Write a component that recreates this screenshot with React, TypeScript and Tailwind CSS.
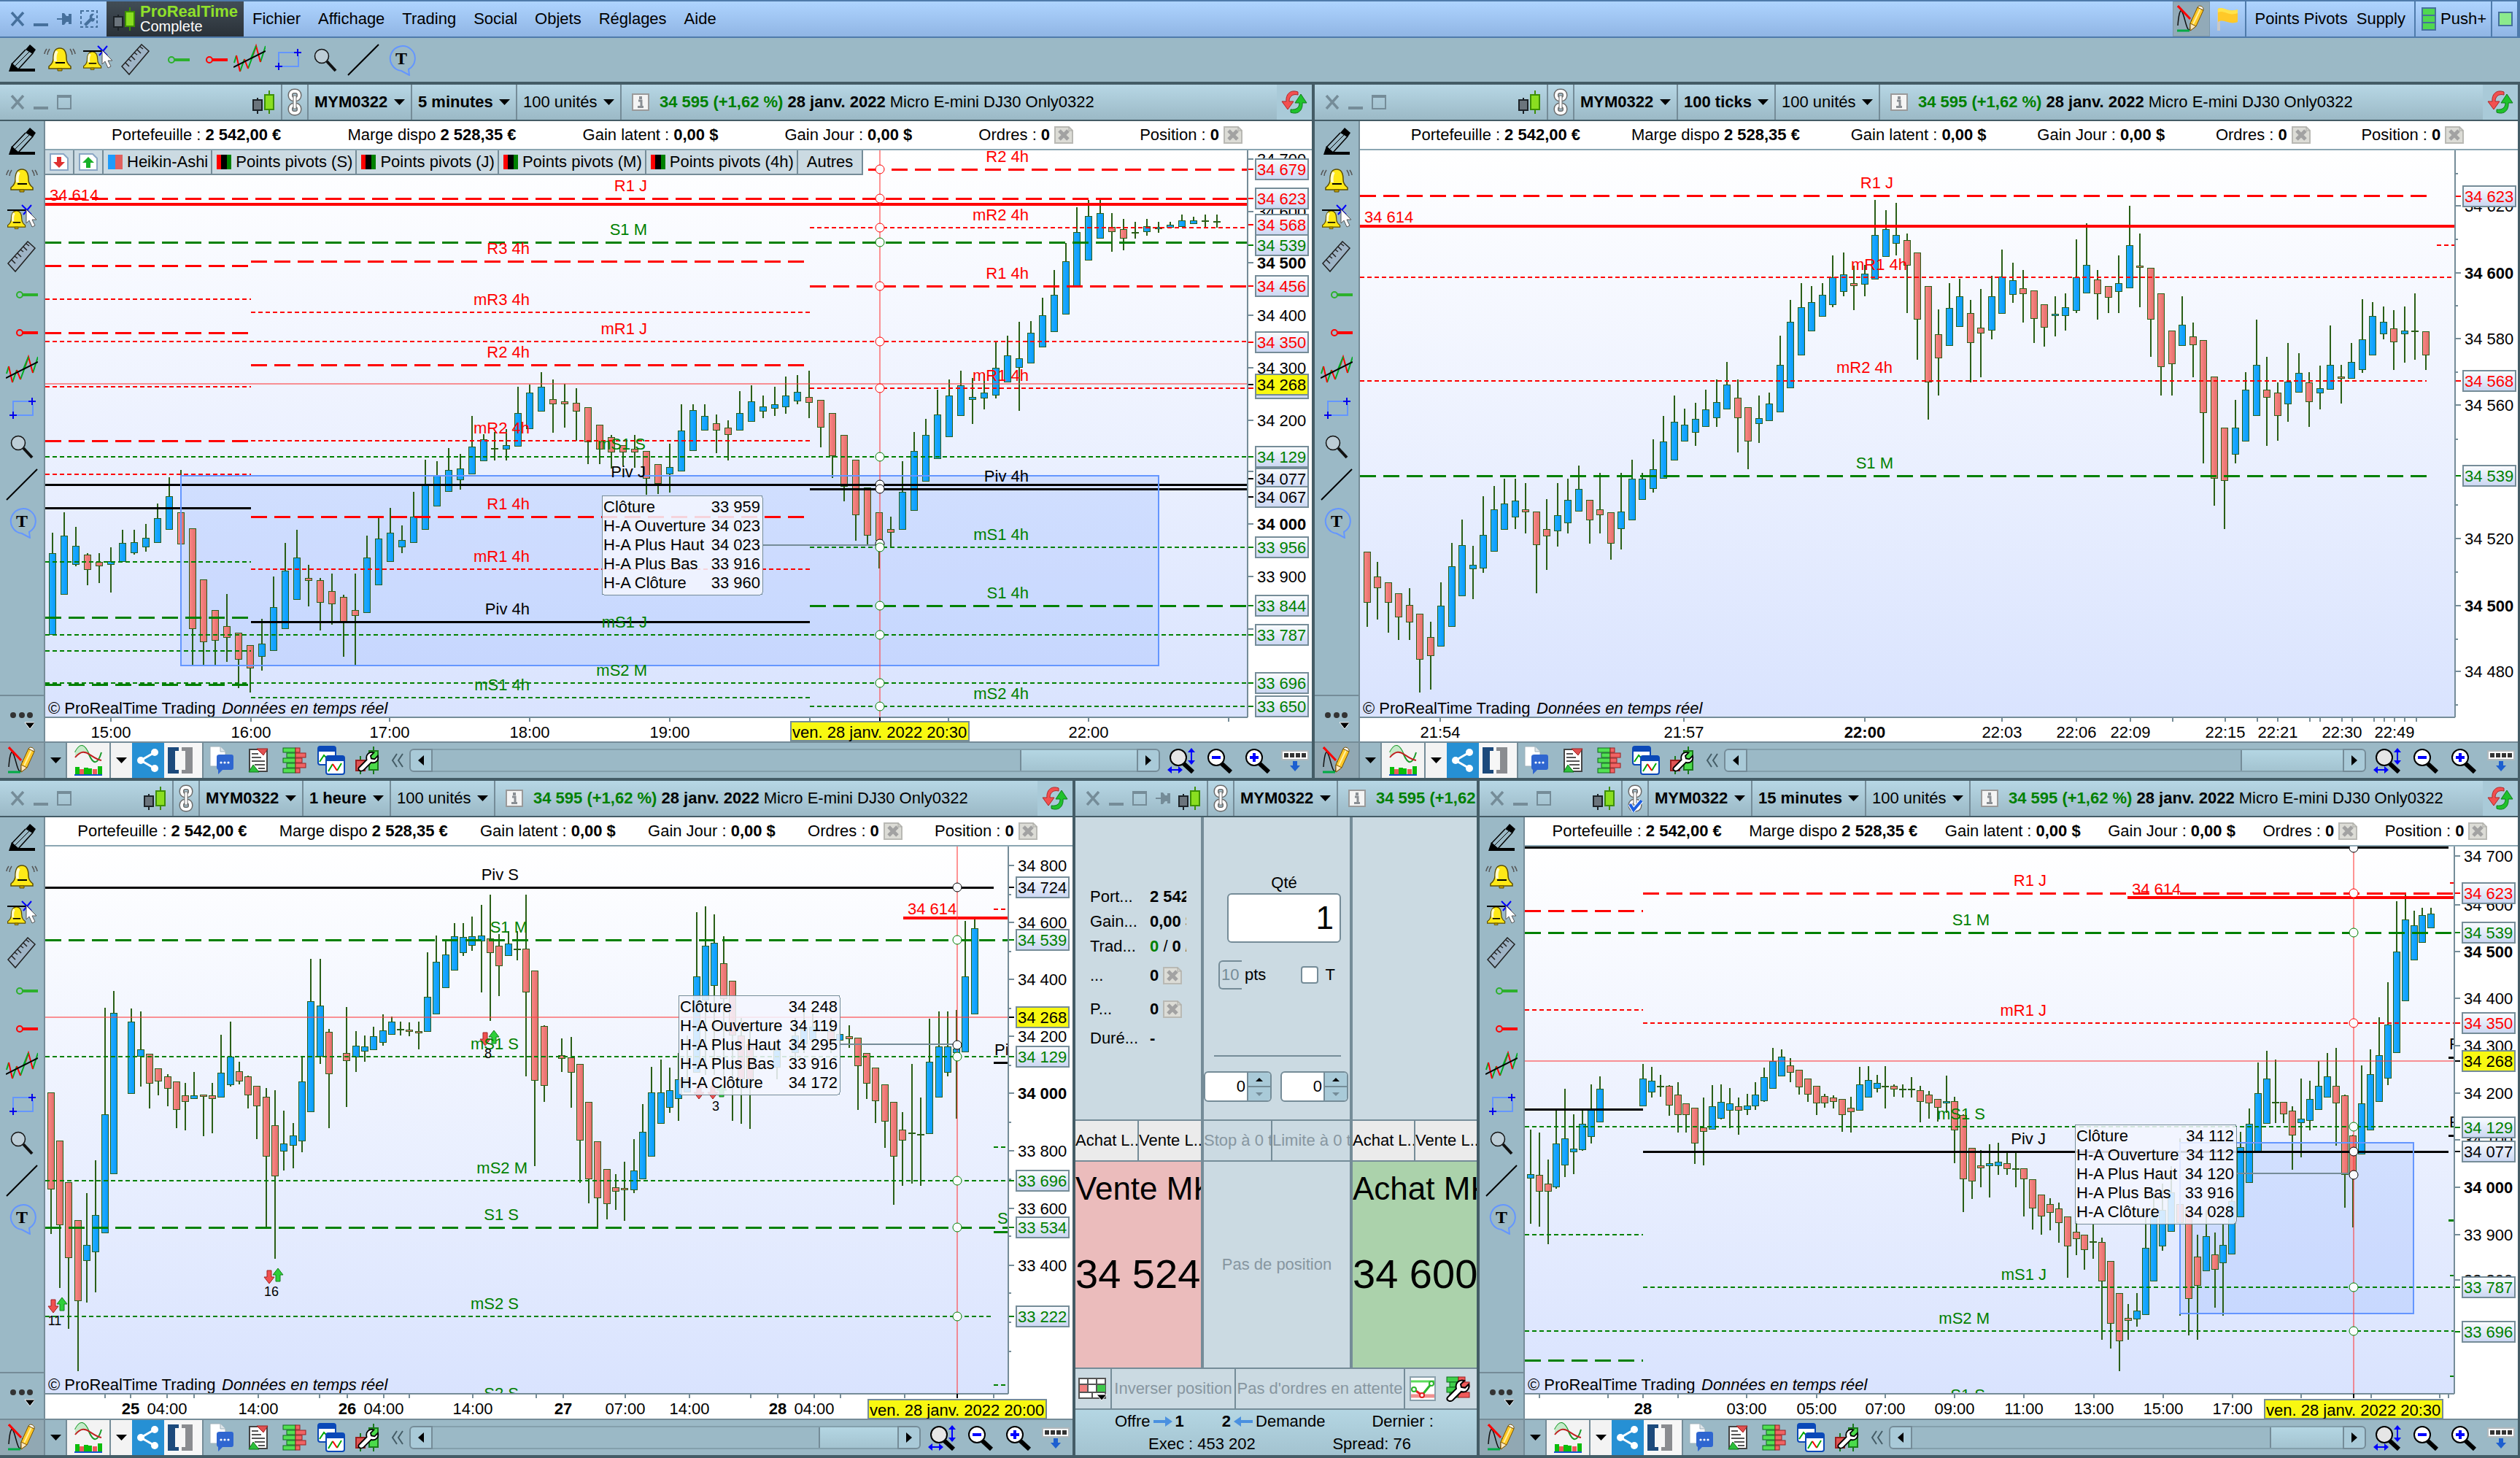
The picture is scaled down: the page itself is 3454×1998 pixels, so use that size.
import { FC, ReactNode } from "react";

type Bar = [number, number, number, number, 0 | 1] | null;

interface Series {
  x0: number;
  step: number;
  segments: { y0: number; k: number; bars: Bar[] }[];
}

interface ChartData {
  id: string;
  x: number;
  y: number;
  w: number;
  h: number;
  right: number;
  bottom: number;
  zone?: [number, number, number, number];
  // y, x1, x2, colour, style
  lines: [number, number, number, string, "dash" | "dot" | "solid" | "thick"][];
  // text, x, baseline, colour, starts at x instead of ending there
  labels: [string, number, number, string, boolean?][];
  // y, text, kind
  axis: [number, string, string?][];
  ticks?: number[];
  // x, text, bold
  times: [number, string, boolean?][];
  timeTicks: number[];
  series: Series;
  cross?: { x: number; y: number; dots: [number, string][]; date: [number, number, string] };
  tip?: { x: number; y: number; w: number; toX: number; lineY: number; values: string[] };
  trades?: { red: [number, number][]; green: [number, number][]; text: [number, number, string][] };
}

const R = "#ff0000";
const G = "#008000";
const K = "#000000";

const fiveMinutes: Series = {
  x0: 72,
  step: 15.96,
  segments: [
    {
      y0: 400,
      k: 2.306,
      bars: [
        [761, 826, 1083, 1083, 1], [696, 770, 956, 956, 1], [742, 803, 863, 868, 1], [826, 830, 878, 928, 0],
        [826, 854, 867, 920, 0], [807, 850, 863, 951, 1], [752, 794, 853, 853, 1], [752, 790, 826, 830, 1],
        [733, 776, 807, 822, 1], [669, 715, 794, 794, 1], [585, 646, 752, 752, 1], [563, 697, 798, 798, 0],
        [748, 748, 1066, 1180, 0], [909, 909, 1107, 1180, 0], [1006, 1006, 1103, 1180, 0], [955, 1057, 1093, 1168, 0],
        [1076, 1076, 1162, 1252, 0], [1117, 1117, 1190, 1265, 0], [1034, 1112, 1153, 1197, 1], [899, 997, 1135, 1135, 1],
        [793, 882, 1066, 1066, 1], [752, 840, 973, 973, 1], [862, 905, 913, 993, 0], [905, 910, 983, 1070, 0],
        [890, 946, 987, 1052, 0], [956, 965, 1048, 1153, 0], [890, 1006, 1024, 1180, 0], [770, 840, 1015, 1015, 1],
        [711, 780, 928, 928, 1], [683, 762, 853, 853, 1], [739, 785, 807, 826, 1], [632, 711, 794, 794, 1],
        [531, 609, 752, 752, 1], [535, 581, 678, 678, 1], [493, 563, 632, 632, 1], [513, 558, 596, 625, 1],
        [392, 489, 577, 577, 1], [449, 466, 535, 535, 1], [443, 494, 499, 532, 1], [433, 485, 499, 532, 1],
        [299, 383, 489, 489, 1], [294, 319, 433, 433, 1], [254, 300, 378, 378, 1], [277, 338, 355, 445, 0],
        [290, 347, 355, 430, 0], [304, 351, 378, 471, 0], [365, 365, 475, 545, 0], [420, 420, 498, 545, 0],
        [452, 458, 508, 558, 0], [485, 485, 508, 549, 0], [452, 495, 508, 555, 0], [503, 503, 591, 642, 0],
        [545, 545, 607, 638, 0], [480, 554, 577, 633, 1], [355, 438, 568, 568, 1], [355, 374, 503, 503, 1],
        [355, 392, 438, 438, 1], [388, 416, 438, 510, 0], [406, 430, 452, 532, 0], [314, 383, 438, 438, 1],
        [295, 346, 410, 410, 1], [327, 361, 378, 398, 1], [300, 356, 370, 393, 1], [267, 328, 365, 384, 1],
        [263, 315, 346, 355, 1], [249, 333, 351, 398, 0], [342, 342, 430, 491, 0], [383, 383, 518, 588, 0],
      ],
    },
    {
      y0: 400,
      k: 2.24,
      bars: [
        [439, 439, 597, 642, 0], [516, 516, 686, 764, 0], [601, 601, 748, 777, 0], [677, 677, 764, 848, 0],
        [690, 727, 740, 782, 0], [520, 614, 731, 731, 1], [430, 489, 672, 672, 1], [390, 440, 583, 583, 1],
        [300, 377, 512, 512, 1], [268, 318, 445, 445, 1], [242, 287, 381, 381, 1], [264, 323, 332, 405, 1],
        [251, 309, 328, 360, 1], [153, 234, 319, 328, 1], [135, 194, 278, 278, 1], [91, 203, 234, 364, 1],
        [90, 126, 220, 220, 1], [18, 72, 171, 171, 1],
      ],
    },
    {
      y0: 0,
      k: 3,
      bars: [
        [1110, 1213, 1366, 1366, 1], [1000, 1075, 1292, 1292, 1], [852, 955, 1175, 1175, 1], [822, 888, 1070, 1070, 1],
        [820, 877, 980, 980, 1], [877, 932, 955, 1035, 0], [900, 942, 980, 1028, 0], [912, 955, 961, 980, 1],
        [900, 931, 955, 968, 1], [912, 932, 943, 956, 1], [912, 925, 937, 937, 1], [882, 907, 932, 932, 1],
        [890, 907, 920, 920, 1], [882, 906, 912, 935, 1], [882, 908, 910, 935, 0],
      ],
    },
  ],
};

const hundredTicks: Series = {
  x0: 1873.8,
  step: 14.51,
  segments: [
    {
      y0: 180,
      k: 1.742,
      bars: [
        [1004, 1004, 1126, 1183, 0], [1028, 1063, 1091, 1166, 0], [1077, 1077, 1126, 1196, 0], [1102, 1102, 1160, 1214, 0],
        [1090, 1130, 1172, 1214, 0], [1151, 1151, 1262, 1340, 0], [1171, 1207, 1252, 1333, 0], [1077, 1133, 1230, 1230, 1],
        [983, 1039, 1182, 1182, 1], [926, 987, 1109, 1109, 1], [990, 1035, 1046, 1117, 1], [871, 963, 1043, 1054, 1],
        [846, 903, 1004, 1004, 1], [829, 889, 952, 952, 1], [829, 882, 921, 950, 1], [840, 903, 910, 960, 0],
        [907, 907, 987, 1103, 0], [878, 949, 966, 1047, 0], [840, 917, 955, 991, 1], [829, 879, 935, 960, 1],
        [798, 854, 907, 907, 1], [879, 879, 928, 984, 0], [815, 903, 917, 960, 0], [910, 910, 984, 1023, 0],
        [815, 907, 949, 998, 1], [784, 830, 928, 928, 1], [815, 830, 879, 879, 1], [735, 806, 854, 862, 1],
        [679, 740, 830, 830, 1], [631, 694, 785, 785, 1], [662, 701, 740, 740, 1], [648, 687, 719, 750, 1],
        [617, 663, 705, 705, 1], [592, 646, 684, 706, 1], [551, 604, 663, 663, 1], [592, 635, 684, 767, 0],
        [659, 659, 740, 806, 0], [630, 684, 698, 743, 1], [624, 649, 691, 691, 1], [488, 558, 670, 670, 1],
        [402, 454, 614, 614, 1], [362, 419, 534, 534, 1], [369, 408, 478, 478, 1], [362, 391, 443, 443, 1],
        [296, 349, 415, 419, 1], [289, 342, 384, 394, 1], [320, 363, 370, 426, 0], [318, 339, 366, 394, 1],
        [164, 248, 353, 353, 1], [189, 234, 300, 300, 1], [171, 248, 269, 297, 1], [244, 259, 321, 433, 0],
        [290, 290, 450, 545, 0], [370, 370, 600, 688, 0], [425, 485, 541, 631, 0], [362, 422, 513, 513, 1],
        [352, 394, 467, 467, 1], [402, 433, 506, 600, 0], [376, 468, 482, 587, 0], [345, 394, 475, 497, 1],
        [282, 346, 436, 436, 1], [313, 356, 391, 409, 1], [331, 374, 388, 457, 0], [380, 380, 447, 506, 0],
        [412, 412, 468, 514, 0], [394, 436, 440, 489, 1], [387, 419, 440, 476, 1], [258, 348, 429, 433, 1],
        [220, 318, 387, 387, 1], [331, 353, 388, 450, 0], [370, 370, 398, 433, 0], [296, 363, 384, 433, 1],
        [178, 272, 374, 374, 1], [244, 321, 325, 420, 0], [325, 325, 450, 538, 0], [387, 387, 562, 631, 0],
        [475, 475, 555, 631, 0], [394, 461, 513, 513, 1], [457, 489, 510, 587, 0], [499, 499, 673, 793, 0],
        [586, 586, 830, 894, 0], [708, 708, 834, 950, 0], [641, 708, 771, 793, 1], [575, 617, 740, 740, 1],
        [449, 558, 680, 680, 1], [538, 617, 635, 750, 0], [600, 624, 680, 738, 0], [505, 597, 652, 694, 1],
        [530, 576, 624, 624, 1], [575, 600, 646, 706, 0], [560, 614, 625, 663, 1], [463, 558, 617, 617, 1],
        [558, 586, 590, 649, 0], [505, 551, 590, 590, 1], [401, 496, 569, 576, 1], [408, 440, 534, 534, 1],
        [418, 454, 485, 496, 1], [426, 471, 503, 569, 0], [418, 475, 485, 552, 1], [387, 475, 478, 545, 1],
        [478, 478, 534, 569, 0],
      ],
    },
  ],
};

const oneHour: Series = {
  x0: 69.8,
  step: 12.29,
  segments: [
    {
      y0: 1060,
      k: 1.6716,
      bars: [
        [730, 730, 953, 1055, 0], [840, 840, 1034, 1178, 0], [936, 936, 1110, 1272, 0], [1023, 1023, 1208, 1369, 0],
        [961, 1080, 1117, 1212, 1], [886, 1011, 1097, 1189, 1], [536, 780, 1053, 1053, 1], [498, 549, 917, 917, 1],
        null, [538, 569, 733, 733, 1], [545, 632, 648, 717, 1], [642, 642, 710, 768, 0],
        [676, 676, 705, 738, 0], [688, 694, 722, 763, 0], [705, 705, 770, 812, 0], [709, 737, 753, 817, 0],
        [684, 738, 745, 745, 1], [736, 736, 740, 830, 0], [709, 737, 746, 824, 0], [598, 686, 742, 742, 1],
        [569, 649, 713, 717, 1], [660, 682, 706, 712, 0], [692, 694, 737, 768, 0], [715, 715, 763, 838, 0],
        [720, 740, 877, 1040, 0], [725, 806, 923, 1112, 0], [773, 847, 866, 910, 1], [800, 829, 853, 904, 1],
        [647, 706, 843, 868, 1], [425, 522, 776, 776, 1], [425, 532, 649, 666, 1], [585, 592, 689, 812, 0],
        null, [535, 640, 659, 764, 0], [590, 623, 650, 683, 1], [600, 626, 637, 660, 1],
        [580, 602, 633, 633, 1], [552, 588, 616, 623, 1], [556, 569, 598, 598, 1], [568, 585, 587, 600, 0],
        [570, 586, 591, 602, 0], [569, 590, 595, 632, 0], [410, 512, 592, 592, 1], [371, 432, 552, 552, 1],
        [385, 415, 491, 491, 1], [342, 372, 452, 452, 1], [342, 374, 411, 418, 1], [328, 373, 395, 406, 1],
        [301, 371, 384, 502, 1], [277, 378, 411, 566, 0], [367, 395, 441, 510, 0], [361, 389, 418, 418, 1],
        [361, 402, 405, 428, 0], [277, 402, 501, 694, 0], [451, 451, 703, 900, 0], [577, 579, 715, 753, 0],
        null, [607, 646, 653, 683, 0], [604, 650, 685, 765, 0], [665, 665, 840, 938, 0],
        [753, 753, 930, 985, 0], [843, 843, 973, 1040, 0], [906, 906, 987, 1021, 0], [918, 948, 957, 1000, 0],
        [890, 949, 954, 1025, 0], [838, 910, 954, 961, 1], [758, 820, 930, 930, 1], [672, 730, 877, 877, 1],
        [656, 730, 803, 803, 1], [673, 725, 766, 777, 1], [640, 700, 746, 795, 1], [600, 700, 730, 730, 1],
        [318, 465, 686, 686, 1], [304, 395, 520, 690, 1], [322, 388, 486, 690, 1], [372, 435, 516, 700, 0],
        [475, 475, 600, 795, 0], [560, 600, 700, 802, 0], [580, 620, 700, 814, 0], null,
        null, [610, 634, 673, 700, 1], null, [560, 600, 640, 660, 1],
        [545, 585, 620, 640, 1], [550, 580, 610, 630, 1], null, [560, 590, 610, 640, 0],
        [565, 596, 612, 625, 1], [577, 602, 609, 628, 0], [605, 605, 670, 771, 0], [640, 640, 710, 745, 0],
        [673, 673, 750, 801, 0], [712, 712, 797, 858, 0], [753, 753, 877, 988, 0], [775, 816, 840, 944, 0],
        [665, 823, 826, 940, 1], [743, 826, 829, 944, 0], [562, 660, 826, 826, 1], [545, 626, 743, 743, 1],
        [545, 626, 686, 693, 1], [542, 630, 640, 790, 1], [338, 465, 639, 639, 1], [333, 355, 552, 552, 1],
      ],
    },
  ],
};

const quarterHour: Series = {
  x0: 2097.8,
  step: 11.87,
  segments: [
    {
      y0: 1060,
      k: 1.6716,
      bars: [
        [815, 917, 927, 1031, 1], [822, 920, 957, 1038, 0], [885, 940, 957, 1078, 0], [767, 847, 947, 951, 1],
        [722, 836, 897, 925, 1], [780, 860, 867, 917, 1], [771, 803, 863, 865, 1], [712, 770, 833, 847, 1],
        [693, 722, 799, 799, 1], null, null, null,
        null, [665, 699, 763, 763, 1], [672, 703, 731, 743, 1], [690, 716, 718, 740, 0],
        [713, 716, 760, 784, 0], [707, 736, 783, 822, 0], [756, 756, 783, 822, 0], [766, 766, 847, 894, 0],
        [742, 810, 820, 897, 0], [713, 763, 816, 816, 1], [712, 753, 790, 792, 1], [720, 756, 773, 813, 1],
        [743, 763, 773, 827, 0], [733, 760, 771, 782, 1], [707, 736, 763, 770, 1], [674, 695, 750, 752, 1],
        [629, 659, 722, 722, 1], [632, 649, 693, 693, 1], [652, 669, 686, 707, 0], [679, 679, 719, 735, 0],
        [699, 699, 736, 752, 0], [716, 716, 756, 783, 0], [733, 739, 756, 765, 0], [738, 743, 753, 767, 0],
        [746, 746, 783, 821, 0], [740, 766, 776, 823, 0], [672, 712, 773, 773, 1], [671, 702, 743, 743, 1],
        [690, 709, 722, 730, 1], [671, 715, 719, 767, 0], [712, 716, 723, 740, 0], [712, 722, 726, 742, 0],
        [696, 722, 725, 742, 0], [715, 726, 753, 799, 0], [727, 736, 756, 790, 0], [745, 746, 766, 797, 0],
        [692, 750, 756, 778, 1], [740, 750, 817, 893, 0], [780, 783, 930, 1005, 0], [857, 857, 934, 974, 0],
        [863, 897, 904, 948, 0], [850, 893, 900, 971, 1], [846, 890, 900, 920, 1], [870, 893, 906, 920, 0],
        [868, 904, 906, 947, 0], [904, 904, 930, 1014, 0], [930, 930, 997, 1045, 0], [964, 964, 1014, 1057, 0],
        [973, 987, 1007, 1047, 0], [983, 996, 1030, 1075, 0], [1014, 1014, 1084, 1155, 0], [1025, 1050, 1067, 1104, 0],
        [1057, 1057, 1091, 1137, 0], [1033, 1071, 1074, 1111, 1], [1063, 1074, 1164, 1297, 0], [1117, 1117, 1261, 1318, 0],
        [1190, 1190, 1301, 1369, 0], [1215, 1247, 1254, 1297, 0], [1190, 1230, 1251, 1267, 1], [1000, 1087, 1240, 1240, 1],
        [960, 1010, 1164, 1164, 1], [940, 1000, 1084, 1093, 1], [900, 960, 1050, 1050, 1], [835, 987, 1030, 1242, 0],
        [1000, 1000, 1204, 1287, 0], [1057, 1107, 1174, 1297, 0], [1000, 1060, 1140, 1140, 1], [1051, 1101, 1137, 1224, 0],
        [1033, 1080, 1121, 1242, 1], [950, 980, 1101, 1101, 1], [820, 856, 1017, 1017, 1], [767, 803, 937, 937, 1],
        [662, 732, 870, 870, 1], [635, 699, 803, 803, 1], [655, 753, 756, 801, 0], [752, 753, 780, 800, 0],
        [763, 773, 829, 907, 0], [699, 790, 800, 880, 1], [703, 746, 796, 817, 1], [659, 716, 770, 770, 1],
        [640, 693, 742, 742, 1], [629, 716, 756, 853, 0], [736, 737, 920, 994, 0], [828, 829, 924, 1040, 0],
        [669, 756, 873, 873, 1], [632, 689, 817, 817, 1], [558, 646, 753, 753, 1], [478, 575, 699, 713, 1],
        [293, 408, 640, 640, 1], [275, 334, 522, 522, 1], [314, 348, 428, 428, 1], [308, 324, 388, 388, 1],
        [308, 321, 355, 355, 1],
      ],
    },
  ],
};

const charts: Record<string, ChartData> = {
  m5: {
    id: "m5", x: 62, y: 206, w: 1736, h: 810, right: 1710, bottom: 983,
    zone: [248, 652, 1588, 912],
    lines: [
      [232, 1190, 1710, R, "dash"], [272, 62, 1710, R, "dash"], [280, 62, 1710, R, "thick"], [312, 1110, 1710, R, "dot"],
      [332, 62, 1710, G, "dash"], [364, 62, 340, R, "dash"], [358, 344, 1104, R, "dash"], [410, 62, 344, R, "dot"],
      [428, 344, 1110, R, "dot"], [456, 62, 340, R, "dash"], [468, 62, 1710, R, "dot"], [500, 344, 1104, R, "dash"],
      [530, 62, 344, R, "dot"], [392, 1110, 1710, R, "dash"], [532, 1110, 1710, R, "dot"], [604, 62, 344, R, "dash"],
      [604, 344, 1110, R, "dot"], [626, 62, 1710, G, "dot"], [650, 62, 344, R, "dot"], [664, 62, 1710, K, "solid"],
      [670, 1110, 1710, K, "solid"], [696, 62, 344, K, "solid"], [708, 344, 1104, R, "dash"], [780, 344, 1110, R, "dot"],
      [770, 62, 344, G, "dot"], [750, 1110, 1710, G, "dot"], [852, 344, 1110, K, "solid"], [830, 1110, 1710, G, "dash"],
      [846, 62, 340, G, "dash"], [870, 62, 1710, G, "dot"], [892, 62, 344, G, "dot"], [936, 62, 1710, G, "dot"],
      [938, 62, 340, G, "dash"], [956, 344, 1110, G, "dot"], [968, 1110, 1710, G, "dot"],
    ],
    labels: [
      ["R2 4h", 1410, 222, R], ["R1 J", 887, 262, R], ["34 614", 68, 275, R, true], ["mR2 4h", 1410, 302, R],
      ["S1 M", 887, 322, G], ["R3 4h", 726, 348, R], ["mR3 4h", 726, 418, R], ["mR1 J", 887, 458, R],
      ["R2 4h", 726, 490, R], ["R1 4h", 1410, 382, R], ["mR1 4h", 1410, 522, R], ["mR2 4h", 726, 594, R],
      ["mS1 S", 885, 616, G], ["Piv J", 885, 654, K], ["Piv 4h", 1410, 660, K], ["R1 4h", 726, 698, R],
      ["mR1 4h", 726, 770, R], ["mS1 4h", 1410, 740, G], ["Piv 4h", 726, 842, K], ["S1 4h", 1410, 820, G],
      ["mS1 J", 887, 860, G], ["mS2 M", 887, 926, G], ["mS1 4h", 726, 946, G], ["mS2 4h", 1410, 958, G],
    ],
    axis: [
      [218, "34 700"], [290, "34 600"], [360, "34 500", "b"], [432, "34 400"], [504, "34 300"], [576, "34 200"],
      [646, "34 100"], [718, "34 000", "b"], [790, "33 900"], [862, "33 800"], [232, "34 679", "r"], [272, "34 623", "r"],
      [308, "34 568", "r"], [336, "34 539", "g"], [392, "34 456", "r"], [469, "34 350", "r"], [532, "34 262", "r"],
      [527, "34 268", "y"], [626, "34 129", "g"], [656, "34 077", "k"], [681, "34 067", "k"], [750, "33 956", "g"],
      [830, "33 844", "g"], [870, "33 787", "g"], [936, "33 696", "g"], [968, "33 650", "g"],
    ],
    times: [[152, "15:00"], [344, "16:00"], [534, "17:00"], [726, "18:00"], [918, "19:00"], [1492, "22:00"]],
    timeTicks: [152, 344, 534, 726, 918, 1110, 1300, 1492, 1684],
    series: fiveMinutes,
    cross: {
      x: 1206, y: 526,
      dots: [[232, R], [272, R], [312, R], [332, G], [392, R], [468, R], [532, R], [626, G], [664, K], [670, K], [745, K], [750, G], [830, G], [870, G], [936, G], [968, G]],
      date: [1084, 989, "ven. 28 janv. 2022 20:30"],
    },
    tip: { x: 825, y: 679, w: 220, toX: 1206, lineY: 747, values: ["33 959", "34 023", "34 023", "33 916", "33 960"] },
  },
  ticks: {
    id: "ticks", x: 1864, y: 206, w: 1587, h: 810, right: 3365, bottom: 983,
    lines: [
      [268, 1864, 3326, R, "dash"], [310, 1864, 3365, R, "thick"], [336, 3340, 3365, R, "dot"], [380, 1864, 3365, R, "dot"],
      [522, 1864, 3326, R, "dot"], [652, 1864, 3326, G, "dash"],
    ],
    labels: [
      ["R1 J", 2595, 258, R], ["34 614", 1870, 305, R, true], ["mR1 4h", 2614, 370, R], ["mR2 4h", 2594, 511, R], ["S1 M", 2595, 642, G],
    ],
    axis: [
      [282, "34 620"], [374, "34 600", "b"], [464, "34 580"], [555, "34 560"], [738, "34 520"], [830, "34 500", "b"],
      [920, "34 480"], [269, "34 623", "r"], [522, "34 568", "r"], [652, "34 539", "g"],
    ],
    ticks: [238, 328, 419, 510, 602, 692, 784, 876, 966],
    times: [
      [1974, "21:54"], [2308, "21:57"], [2556, "22:00", true], [2744, "22:03"], [2846, "22:06"], [2920, "22:09"],
      [3050, "22:15"], [3122, "22:21"], [3210, "22:30"], [3282, "22:49"],
    ],
    timeTicks: [1974, 2308, 2556, 2744, 2846, 2920, 2978, 3050, 3094, 3122, 3166, 3180, 3210, 3224, 3254, 3268, 3282, 3296, 3312],
    series: hundredTicks,
  },
  h1: {
    id: "h1", x: 62, y: 1160, w: 1408, h: 784, right: 1382, bottom: 1910,
    lines: [
      [1216, 62, 1362, K, "solid"], [1246, 1362, 1380, R, "dot"], [1258, 1238, 1382, R, "thick"], [1288, 62, 1382, G, "dash"],
      [1448, 62, 1382, G, "dot"], [1456, 1362, 1382, K, "solid"], [1572, 1362, 1382, G, "dot"], [1618, 62, 1382, G, "dot"],
      [1682, 62, 1382, G, "dash"], [1688, 1362, 1382, G, "solid"], [1804, 62, 1362, G, "dot"], [1898, 1362, 1380, G, "dot"],
    ],
    labels: [
      ["Piv S", 711, 1206, K], ["S1 M", 723, 1278, G], ["34 614", 1244, 1253, R, true], ["mS1 S", 711, 1438, G],
      ["mS2 M", 723, 1608, G], ["S1 S", 711, 1672, G], ["mS2 S", 711, 1794, G], ["S2 S", 711, 1917, G],
      ["Piv S", 1363, 1446, K, true], ["S1 S", 1367, 1677, G, true],
    ],
    axis: [
      [1186, "34 800"], [1264, "34 600"], [1342, "34 400"], [1420, "34 200"], [1498, "34 000", "b"], [1577, "33 800"],
      [1656, "33 600"], [1734, "33 400"], [1216, "34 724", "k"], [1288, "34 539", "g"], [1394, "34 268", "y"],
      [1448, "34 129", "g"], [1618, "33 696", "g"], [1682, "33 534", "g"], [1804, "33 222", "g"],
    ],
    ticks: [1226, 1304, 1382, 1460, 1538, 1616, 1694, 1772, 1812, 1852],
    times: [
      [179, "25", true], [229, "04:00"], [354, "14:00"], [476, "26", true], [526, "04:00"], [648, "14:00"],
      [772, "27", true], [857, "07:00"], [945, "14:00"], [1066, "28", true], [1116, "04:00"],
    ],
    timeTicks: [144, 179, 229, 266, 354, 438, 476, 526, 561, 648, 735, 772, 857, 945, 1029, 1066, 1116, 1152, 1240, 1362],
    series: oneHour,
    cross: {
      x: 1312, y: 1394,
      dots: [[1216, K], [1288, G], [1432, K], [1448, G], [1618, G], [1682, G], [1804, G]],
      date: [1190, 1918, "ven. 28 janv. 2022 20:00"],
    },
    tip: { x: 930, y: 1364, w: 221, toX: 1312, lineY: 1431, values: ["34 248", "34 119", "34 295", "33 916", "34 172"] },
    trades: {
      red: [[665, 1424], [369, 1750], [73, 1790], [958, 1497], [977, 1497]],
      green: [[677, 1421], [381, 1747], [85, 1787], [989, 1494]],
      text: [[669, 1450, "8"], [372, 1776, "16"], [75, 1816, "11"], [981, 1522, "3"]],
    },
  },
  m15: {
    id: "m15", x: 2090, y: 1160, w: 1361, h: 784, right: 3364, bottom: 1910,
    zone: [2988, 1566, 3308, 1800],
    lines: [
      [1161, 2090, 3356, K, "solid"], [1248, 2090, 2252, R, "dash"], [1224, 2252, 3364, R, "dash"], [1230, 2916, 3364, R, "thick"],
      [1278, 2090, 3364, G, "dash"], [1384, 2090, 2252, R, "dot"], [1402, 2252, 3364, R, "dot"], [1520, 2090, 2252, K, "solid"],
      [1544, 2090, 3364, G, "dot"], [1578, 2252, 3356, K, "solid"], [1692, 2090, 2252, G, "dot"], [1764, 2252, 3364, G, "dot"],
      [1824, 2090, 3364, G, "dot"], [1864, 2090, 2252, G, "dash"], [1210, 3358, 3364, R, "dot"], [1449, 3356, 3364, K, "solid"],
      [1556, 3356, 3364, K, "solid"], [1672, 3356, 3364, G, "solid"], [1748, 3358, 3364, G, "dot"], [1886, 3358, 3364, G, "dot"],
    ],
    labels: [
      ["R1 J", 2805, 1214, R], ["34 614", 2922, 1226, R, true], ["S1 M", 2727, 1268, G], ["mR1 J", 2805, 1392, R],
      ["mS1 S", 2721, 1534, G], ["Piv J", 2804, 1568, K], ["mS1 J", 2805, 1754, G], ["mS2 M", 2727, 1814, G],
      ["S1 S", 2721, 1919, G], ["Piv", 3357, 1438, K, true], ["Piv", 3357, 1545, K, true],
    ],
    axis: [
      [1173, "34 700"], [1240, "34 600"], [1304, "34 500", "b"], [1368, "34 400"], [1433, "34 300"], [1498, "34 200"],
      [1562, "34 100"], [1627, "34 000", "b"], [1692, "33 900"], [1754, "33 800"], [1224, "34 623", "r"], [1278, "34 539", "g"],
      [1402, "34 350", "r"], [1454, "34 268", "y"], [1545, "34 129", "g"], [1578, "34 077", "k"], [1764, "33 787", "g"],
      [1825, "33 696", "g"],
    ],
    times: [
      [2252, "28", true], [2394, "03:00"], [2490, "05:00"], [2584, "07:00"], [2679, "09:00"], [2774, "11:00"],
      [2870, "13:00"], [2965, "15:00"], [3060, "17:00"],
    ],
    timeTicks: [2110, 2204, 2252, 2300, 2394, 2490, 2584, 2679, 2774, 2870, 2965, 3060, 3154, 3250, 3344, 3356],
    series: quarterHour,
    cross: {
      x: 3226, y: 1454,
      dots: [[1162, K], [1224, R], [1278, G], [1402, R], [1544, G], [1578, K], [1610, K], [1764, G], [1824, G]],
      date: [3104, 1918, "ven. 28 janv. 2022 20:30"],
    },
    tip: { x: 2844, y: 1541, w: 221, toX: 3226, lineY: 1608, values: ["34 112", "34 112", "34 120", "33 916", "34 028"] },
  },
};

const tipNames = ["Clôture", "H-A Ouverture", "H-A Plus Haut", "H-A Plus Bas", "H-A Clôture"];
const axisColors: Record<string, string> = { r: R, g: G, k: K, y: K, b: K };

const Candles: FC<{ series: Series }> = ({ series }) => {
  let n = -1;
  return (
    <g>
      {series.segments.map((seg) =>
        seg.bars.map((bar) => {
          n += 1;
          if (!bar) return null;
          const x = Math.round(series.x0 + n * series.step);
          const [high, top, bottom, low] = [bar[0], bar[1], bar[2], bar[3]].map((v) => Math.round(seg.y0 + v / seg.k));
          return (
            <g key={n}>
              <rect x={x - 1} y={high} width={2} height={low - high} fill="#2a5f17" />
              <rect x={x - 5} y={top} width={10} height={Math.max(bottom - top, 2)} fill="#2a5f17" />
              <rect x={x - 4} y={top + 1} width={8} height={Math.max(bottom - top - 2, 0)} fill={bar[4] ? "url(#up)" : "url(#down)"} />
            </g>
          );
        }),
      )}
    </g>
  );
};

const Chart: FC<{ data: ChartData }> = ({ data }) => {
  const { x, y, w, h, right, bottom } = data;
  const dash = { dash: "22 10", dot: "6 4", solid: undefined, thick: undefined };
  const width = { dash: 3, dot: 2, solid: 3, thick: 4 };
  const clip = `url(#clip-${data.id})`;
  return (
    <svg viewBox={`${x} ${y} ${w} ${h}`} className="block w-full bg-white" fontFamily="'Liberation Sans', Arial, sans-serif" fontSize={22} shapeRendering="crispEdges" role="img" aria-label="MYM0322">
      <defs>
        <linearGradient id={`bg-${data.id}`} x1="0" y1="0" x2="0" y2="1">
          <stop offset="0" stopColor="#fff" />
          <stop offset="1" stopColor="#d9e3fe" />
        </linearGradient>
        <linearGradient id={`box-${data.id}`} x1="0" y1="0" x2="0" y2="1">
          <stop offset="0" stopColor="#fbfdff" />
          <stop offset="1" stopColor="#cad6f2" />
        </linearGradient>
        <linearGradient id="up">
          <stop offset="0" stopColor="#1fadff" />
          <stop offset="1" stopColor="#0a9bff" />
        </linearGradient>
        <linearGradient id="down">
          <stop offset="0" stopColor="#fb8684" />
          <stop offset="1" stopColor="#e36f6c" />
        </linearGradient>
        <clipPath id={`clip-${data.id}`}>
          <rect x={x} y={y} width={right - x} height={bottom - y} />
        </clipPath>
      </defs>
      <rect x={x} y={y} width={right - x} height={bottom - y} fill={`url(#bg-${data.id})`} />
      <g clipPath={clip}>
        {data.zone && (
          <rect x={data.zone[0]} y={data.zone[1]} width={data.zone[2] - data.zone[0]} height={data.zone[3] - data.zone[1]} fill="#6496ff" fillOpacity={0.18} />
        )}
        <Candles series={data.series} />
        {data.trades && (
          <g shapeRendering="auto">
            {data.trades.red.map(([cx, cy]) => (
              <path key={cx} d={`M${cx - 3} ${cy - 9}h6v9h4l-7 9l-7 -9h4z`} fill="#f05050" stroke="#a02020" />
            ))}
            {data.trades.green.map(([cx, cy]) => (
              <path key={cx} d={`M${cx - 3} ${cy + 9}h6v-9h4l-7 -9l-7 9h4z`} fill="#2fd03a" stroke="#15801c" />
            ))}
          </g>
        )}
        {data.lines.map(([ly, x1, x2, color, kind], i) => (
          <line key={i} x1={x1} x2={x2} y1={ly} y2={ly} stroke={color} strokeWidth={width[kind]} strokeDasharray={dash[kind]} />
        ))}
        {data.zone && (
          <rect x={data.zone[0]} y={data.zone[1]} width={data.zone[2] - data.zone[0]} height={data.zone[3] - data.zone[1]} fill="none" stroke="#6496ff" strokeWidth={2} />
        )}
        {data.cross && (
          <g stroke="#ff3c3c" strokeOpacity={0.55} strokeWidth={2}>
            <line x1={x} x2={right} y1={data.cross.y} y2={data.cross.y} />
            <line x1={data.cross.x} x2={data.cross.x} y1={y} y2={bottom} />
          </g>
        )}
        {data.labels.map(([text, lx, ly, color, start], i) => (
          <text key={i} x={lx} y={ly} fill={color} textAnchor={start ? "start" : "end"}>
            {text}
          </text>
        ))}
        {data.trades?.text.map(([tx, ty, text]) => (
          <text key={tx} x={tx} y={ty} fontSize={18} textAnchor="middle">
            {text}
          </text>
        ))}
        {data.tip && <line x1={data.tip.x + data.tip.w} x2={data.tip.toX} y1={data.tip.lineY} y2={data.tip.lineY} stroke="#758c98" strokeWidth={2} />}
        {data.cross?.dots.map(([cy, color]) => (
          <circle key={cy} cx={data.cross!.x} cy={cy} r={6} fill="#fbfcff" stroke={color} shapeRendering="auto" />
        ))}
        {data.tip && (
          <g>
            <rect x={data.tip.x} y={data.tip.y} width={data.tip.w} height={136} rx={3} fill="#f3f6ff" fillOpacity={0.86} stroke="#758c98" strokeWidth={1} />
            {tipNames.map((name, i) => (
              <g key={name}>
                <text x={data.tip!.x + 2} y={data.tip!.y + 23 + i * 26}>{name}</text>
                <text x={data.tip!.x + data.tip!.w - 3} y={data.tip!.y + 23 + i * 26} textAnchor="end">{data.tip!.values[i]}</text>
              </g>
            ))}
          </g>
        )}
        <text x={x + 4} y={bottom - 5}>© ProRealTime Trading</text>
        <text x={x + 242} y={bottom - 5} fontStyle="italic">Données en temps réel</text>
      </g>
      <g stroke="#758c98" strokeWidth={2}>
        <line x1={right} x2={right} y1={y} y2={bottom} />
        <line x1={x} x2={right} y1={bottom} y2={bottom} />
        {data.timeTicks.map((t) => (
          <line key={t} x1={t} x2={t} y1={bottom} y2={bottom + 6} />
        ))}
        {data.ticks?.map((t) => (
          <line key={t} x1={right} x2={right + 4} y1={t} y2={t} />
        ))}
      </g>
      {data.axis.map(([ay, text, kind]) => {
        const boxed = kind && kind !== "b";
        return (
          <g key={text}>
            <line x1={right + 1} x2={right + 8} y1={ay} y2={ay} stroke={boxed ? axisColors[kind] : "#758c98"} strokeWidth={2} />
            {boxed && (
              <rect x={right + 11} y={ay - 14} width={72} height={28} fill={kind === "y" ? "#f8f811" : `url(#box-${data.id})`} stroke="#758c98" strokeWidth={2} />
            )}
            <text x={right + 13} y={ay + 8} fill={kind ? axisColors[kind] : K} fontWeight={kind === "b" ? 700 : 400}>
              {text}
            </text>
          </g>
        );
      })}
      {data.times.map(([tx, text, bold]) => (
        <text key={tx} x={tx} y={bottom + 28} textAnchor="middle" fontWeight={bold ? 700 : 400}>
          {text}
        </text>
      ))}
      {data.cross && (
        <g>
          <line x1={data.cross.x} x2={data.cross.x} y1={bottom} y2={bottom + 6} stroke={K} strokeWidth={2} />
          <rect x={data.cross.date[0]} y={data.cross.date[1]} width={244} height={26} fill="#f8f811" stroke="#758c98" strokeWidth={2} />
          <text x={data.cross.date[0] + 2} y={data.cross.date[1] + 22}>{data.cross.date[2]}</text>
        </g>
      )}
    </svg>
  );
};

/* ---------- icons ---------- */

const Svg: FC<{ w?: number; h?: number; children: ReactNode }> = ({ w = 44, h = 44, children }) => (
  <svg width={w} height={h} viewBox={`0 0 ${w} ${h}`} fill="none" className="shrink-0" aria-hidden="true">
    {children}
  </svg>
);

const Caret: FC = () => (
  <Svg w={15} h={8}>
    <path d="M0 0h15L7.500 8z" fill="#000" />
  </Svg>
);

const CandleIcon: FC = () => (
  <Svg w={32} h={34}>
    <path d="M8 11v22" stroke="#1c2227" strokeWidth="2" />
    <rect x="2" y="14" width="12" height="14" fill="#6b747c" stroke="#1c2227" strokeWidth="2" />
    <path d="M24 1v32" stroke="#3d8f05" strokeWidth="2" />
    <rect x="18" y="7" width="12" height="20" fill="#8ade20" stroke="#3d8f05" strokeWidth="2" />
  </Svg>
);

const ChainIcon: FC<{ checked?: boolean }> = ({ checked }) => (
  <Svg w={22} h={38}>
    {[9, 28].map((cy) => (
      <g key={cy}>
        <rect x="5" y={cy - 5} width="12" height="11" rx="5" stroke="#6c6c6c" strokeWidth="7" />
        <rect x="5" y={cy - 5} width="12" height="11" rx="5" stroke="#fff" strokeWidth="4" />
      </g>
    ))}
    <rect x="9" y="10" width="4" height="18" fill="#fff" stroke="#6c6c6c" />
    {checked && <path d="M4 27l5 8L20 22" stroke="#fff" strokeWidth="6" />}
    {checked && <path d="M4 27l5 8L20 22" stroke="#1d5fe0" strokeWidth="4" />}
  </Svg>
);

const RefreshIcon: FC = () => (
  <Svg w={38} h={36}>
    <path d="M24 4C13 0 7 8 8 17H2l8 11 8-11h-6c0-6 4-11 12-9z" fill="#f25050" stroke="#b02525" />
    <path d="M14 32c11 4 17-4 16-13h6L28 7l-8 12h6c0 6-4 10-12 9z" fill="#1fc22c" stroke="#0e7d18" />
  </Svg>
);

const InfoIcon: FC = () => (
  <Svg w={24} h={24}>
    <rect x="1" y="1" width="22" height="22" fill="#f4f4f4" stroke="#9a9a9a" strokeWidth="2" />
    <path d="M9 10h4v8M8 18.500h8" stroke="#8a8f94" strokeWidth="3" />
    <rect x="10" y="4" width="4" height="4" fill="#8a8f94" />
  </Svg>
);

const CancelIcon: FC = () => (
  <Svg w={26} h={24}>
    <path d="M1 1h19l5 5v17H1z" fill="#dcdcd6" stroke="#b9b9b4" strokeWidth="2" />
    <path d="M20 1v5h5" stroke="#a9a9a4" />
    <path d="M7 6l12 12M19 6L7 18" stroke="#a2a2a2" strokeWidth="5" />
  </Svg>
);

const PinIcon: FC<{ color: string }> = ({ color }) => (
  <Svg w={20} h={20}>
    <path d="M0 9h8v2H0zM7 2h3l3 4h3V3h4v14h-4v-3h-3l-3 4H7z" fill={color} />
  </Svg>
);

const PencilChart: FC = () => (
  <Svg w={38} h={38}>
    <path d="M1 28C2 14 4 6 6 8c4 4 6 24 10 26 3 1 3-8 4-14" stroke="#111" strokeWidth="1.500" />
    <path d="M1 1l17 18" stroke="#f00" strokeWidth="3" />
    <path d="M0 35h17" stroke="#0a4" strokeWidth="3" />
    <path d="M18 25L28 3l8 4-10 22-8 6z" fill="#ffc928" stroke="#7a5200" />
    <path d="M22 26L32 5" stroke="#fff0a0" strokeWidth="2" />
    <path d="M28 3c2-4 9-1 8 4z" fill="#fff" stroke="#7a5200" />
    <path d="M18 25l8 4-8 6z" fill="#fde7c0" stroke="#7a5200" />
  </Svg>
);

const BellShape: FC = () => (
  <>
    <path d="M22 6c-8 0-9 8-9 14 0 5-2 8-6 11v3h30v-3c-4-3-6-6-6-11 0-6-1-14-9-14z" fill="#ffe917" stroke="#5c4d00" strokeWidth="1.500" />
    <path d="M18 10c-2 3-3 8-2 14" stroke="#fffbd0" strokeWidth="4" />
    <path d="M16 26h13" stroke="#000" strokeWidth="2" />
    <path d="M19 34h6v3h-6z" fill="#c9a600" stroke="#5c4d00" />
  </>
);

const tools: { name: string; icon: ReactNode }[] = [
  {
    name: "Crayon",
    icon: (
      <Svg>
        <path d="M8 28L27 8M17 35L37 13" stroke="#000" strokeWidth="1.500" />
        <path d="M12 31L32 11" stroke="#000" />
        <path d="M27 8l6-7 8 7-4 6zM4 38l4-12 9 8h23v4z" fill="#000" />
      </Svg>
    ),
  },
  {
    name: "Alerte",
    icon: (
      <Svg>
        <BellShape />
        <path d="M8 7c-2 3-3 5-3 8M4 7c-2 3-3 5-3 7M36 7c2 3 3 5 3 8M40 7c2 3 3 5 3 7" stroke="#555" strokeWidth="1.500" />
      </Svg>
    ),
  },
  {
    name: "Alerte sur objet",
    icon: (
      <Svg>
        <g transform="translate(-3 6) scale(.8)">
          <BellShape />
        </g>
        <path d="M2 10h27" stroke="#000" strokeWidth="2" />
        <path d="M22 3l13 13M35 3L24 16" stroke="#00f" strokeWidth="2" />
        <path d="M28 9v19l4-4 4 9 4-2-4-8h6z" fill="#fff" stroke="#555" />
      </Svg>
    ),
  },
  {
    name: "Règle",
    icon: (
      <Svg>
        <path d="M3 31L30 1l10 9-27 32z" fill="#9fb4c6" stroke="#222" strokeWidth="1.500" />
        <path d="M8 26l5 5M12 21l4 3M16 17l5 5M20 12l4 3M24 8l5 5M28 4l4 3" stroke="#222" strokeWidth="1.500" />
      </Svg>
    ),
  },
  {
    name: "Achat",
    icon: (
      <Svg>
        <circle cx="19" cy="22" r="4" stroke="#2cb02c" strokeWidth="2" />
        <path d="M23 22h21" stroke="#2cb02c" strokeWidth="4" />
      </Svg>
    ),
  },
  {
    name: "Vente",
    icon: (
      <Svg>
        <circle cx="19" cy="22" r="4" stroke="#f00" strokeWidth="2" />
        <path d="M23 22h21" stroke="#f00" strokeWidth="4" />
      </Svg>
    ),
  },
  {
    name: "Zigzag",
    icon: (
      <Svg>
        <path d="M1 26l3-10M9 38l6-17M20 34l7-19M37 25L44 3" stroke="#0a2" strokeWidth="2" />
        <path d="M4 16l5 22M15 21l5 13M27 15l4-12 6 22" stroke="#f00" strokeWidth="2" />
        <path d="M24 20l7-17" stroke="#0a2" strokeWidth="2" />
        <path d="M0 32L44 10" stroke="#000" strokeWidth="2" />
      </Svg>
    ),
  },
  {
    name: "Rectangle",
    icon: (
      <Svg>
        <path d="M10 31V12h23M37 16v15H14" stroke="#6496ff" strokeWidth="2" />
        <path d="M31 12h10M36 7v10M5 31h10M10 26v10" stroke="#00e" strokeWidth="2" />
      </Svg>
    ),
  },
  {
    name: "Loupe",
    icon: (
      <Svg>
        <circle cx="17" cy="17" r="9.500" fill="#bccdd6" stroke="#111" strokeWidth="1.500" />
        <path d="M24 24l12 13" stroke="#111" strokeWidth="4" />
      </Svg>
    ),
  },
  {
    name: "Droite",
    icon: (
      <Svg>
        <path d="M1 43L43 1" stroke="#000" strokeWidth="2" />
      </Svg>
    ),
  },
  {
    name: "Texte",
    icon: (
      <Svg>
        <path d="M32 35A17 17 0 1 0 22 37l11 6z" stroke="#6496ff" strokeWidth="2" />
        <text x="22" y="28" textAnchor="middle" fontFamily="'Liberation Serif', serif" fontWeight="700" fontSize="24" fill="#000">T</text>
      </Svg>
    ),
  },
];

const Wrench: FC = () => (
  <path d="M2 30L14 18c-2-8 4-13 11-11l-5 5 1 4 5 1 5-5c2 7-4 12-10 10L9 34c-5 3-9-1-7-4z" fill="#fff" stroke="#000" strokeWidth="2" />
);

const bottomTools: { name: string; icon: ReactNode }[] = [
  {
    name: "Messages",
    icon: (
      <Svg w={34} h={40}>
        <path d="M1 1h14l7 7v20H1z" fill="#fff" stroke="#9db0ba" />
        <path d="M15 1v7h7" stroke="#9db0ba" fill="#dfe6ea" />
        <path d="M14 12h16q3 0 3 3v15q0 3-3 3H18l-6 6v-6q-2-1-2-3V15q0-3 4-3z" fill="#2f66d0" />
        <circle cx="16" cy="23" r="1.600" fill="#fff" />
        <circle cx="21" cy="23" r="1.600" fill="#fff" />
        <circle cx="26" cy="23" r="1.600" fill="#fff" />
      </Svg>
    ),
  },
  {
    name: "Liste",
    icon: (
      <Svg w={28} h={34}>
        <rect x="2" y="2" width="24" height="30" fill="#fff" stroke="#444" strokeWidth="2" />
        <path d="M5 8h9M5 13h13M5 18h18M9 23h14M14 28h9" stroke="#555" strokeWidth="2" />
        <path d="M12 1h15l-6 9z" fill="#e05050" stroke="#a02020" />
        <path d="M1 33l6-10 8 10z" fill="#2cc03a" stroke="#107818" />
      </Svg>
    ),
  },
  {
    name: "Carnet",
    icon: (
      <Svg w={34} h={36}>
        {[[0, 1], [5, 8], [0, 15], [5, 22], [0, 29]].map(([bx, by]) => (
          <rect key={by} x={bx + 1} y={by} width={17 - bx} height="6" fill="#52e052" stroke="#0f6a1a" />
        ))}
        {[[24, 1], [32, 8], [27, 15], [32, 22], [24, 29]].map(([bx, by]) => (
          <rect key={by} x="18" y={by} width={bx - 18} height="6" fill="#f06464" stroke="#9a1f1f" />
        ))}
      </Svg>
    ),
  },
  {
    name: "Graphiques",
    icon: (
      <Svg w={38} h={40}>
        <rect x="1" y="1" width="24" height="25" rx="3" fill="#fff" stroke="#0b49b8" strokeWidth="2" />
        <path d="M1 2h24v6H1z" fill="#0b49b8" />
        <path d="M3 22l6-9 4 4" stroke="#0a0" strokeWidth="2" />
        <rect x="12" y="14" width="25" height="25" rx="3" fill="#fff" stroke="#0b49b8" strokeWidth="2" />
        <path d="M12 15h25v6H12z" fill="#0b49b8" />
        <path d="M15 35l6-10M27 34l6-10" stroke="#0a0" strokeWidth="2" />
        <path d="M21 25l6 9" stroke="#f00" strokeWidth="2" />
      </Svg>
    ),
  },
  {
    name: "Réglages",
    icon: (
      <Svg w={34} h={40}>
        <path d="M7 14v25M25 1v38" stroke="#1a7a1a" strokeWidth="2" />
        <rect x="1" y="20" width="12" height="14" fill="#e05555" stroke="#9a1f1f" strokeWidth="2" />
        <rect x="19" y="7" width="12" height="26" fill="#4bdb4b" stroke="#1a7a1a" strokeWidth="2" />
        <g transform="translate(3 3) scale(.9)">
          <Wrench />
        </g>
      </Svg>
    ),
  },
];

const zoomTools: { name: string; icon: ReactNode }[] = [
  {
    name: "Zoom automatique",
    icon: (
      <Svg w={38} h={36}>
        <circle cx="15" cy="14" r="11" fill="#e6e6e6" stroke="#000" strokeWidth="2" />
        <path d="M22 22l13 12" stroke="#000" strokeWidth="6" />
        <path d="M33 5v16M6 31h10" stroke="#00f" strokeWidth="2" />
        <path d="M33 1l5 6H28zM33 24l5-6H28zM0 31l6-5v10zM21 31l-6-5v10z" fill="#00f" />
      </Svg>
    ),
  },
  {
    name: "Zoom arrière",
    icon: (
      <Svg w={38} h={36}>
        <circle cx="15" cy="14" r="11" fill="#fff" stroke="#000" strokeWidth="2" />
        <path d="M22 22l13 12" stroke="#000" strokeWidth="6" />
        <path d="M9 14h12" stroke="#00f" strokeWidth="4" />
      </Svg>
    ),
  },
  {
    name: "Zoom avant",
    icon: (
      <Svg w={38} h={36}>
        <circle cx="15" cy="14" r="11" fill="#fff" stroke="#000" strokeWidth="2" />
        <path d="M22 22l13 12" stroke="#000" strokeWidth="6" />
        <path d="M9 14h12M15 8v12" stroke="#00f" strokeWidth="4" />
      </Svg>
    ),
  },
  {
    name: "Clavier",
    icon: (
      <Svg w={38} h={32}>
        <rect x="1" y="3" width="36" height="12" fill="#fff" stroke="#b0b8bc" strokeWidth="2" />
        <path d="M4 9h30" stroke="#333" strokeWidth="6" strokeDasharray="6 2" />
        <path d="M16 17h6v6h4l-7 8-7-8h4z" fill="#1d5fd0" />
      </Svg>
    ),
  },
];

/* ---------- window parts ---------- */

const Dropdown: FC<{ label: string; value: string; bold?: boolean }> = ({ label, value, bold }) => (
  <label className="flex items-center gap-2 self-stretch border-r-2 border-[#758c98] px-2">
    <select aria-label={label} className={`appearance-none bg-transparent ${bold ? "font-bold" : ""}`}>
      <option>{value}</option>
    </select>
    <Caret />
  </label>
);

const WindowButtons: FC<{ pin?: boolean }> = ({ pin }) => (
  <div className="flex shrink-0 gap-3 pl-3.5">
    <button type="button" aria-label="Fermer">
      <Svg w={20} h={20}>
        <path d="M2 1l16 18M18 1L2 19" stroke="#758c98" strokeWidth="3.500" />
      </Svg>
    </button>
    <button type="button" aria-label="Réduire">
      <Svg w={20} h={20}>
        <path d="M0 18h20" stroke="#758c98" strokeWidth="4" />
      </Svg>
    </button>
    <button type="button" aria-label="Agrandir">
      <Svg w={20} h={20}>
        <path d="M1 1h18v18H1zM1 3h18" stroke="#758c98" strokeWidth="2" />
      </Svg>
    </button>
    {pin && (
      <button type="button" aria-label="Épingler">
        <PinIcon color="#758c98" />
      </button>
    )}
  </div>
);

interface PaneProps {
  chart: ChartData;
  frame: string;
  offset: string;
  thumb: string;
  checked?: boolean;
  tabs?: boolean;
}

const TitleBar: FC<{ frame?: string; offset: string; checked?: boolean; pin?: boolean }> = ({ frame, offset, checked, pin }) => (
  <div className="flex h-[50px] items-center overflow-hidden border-b-2 border-[#445c66] bg-linear-to-b from-[#b7d7e5] to-[#9bb9c6] whitespace-nowrap">
    <WindowButtons pin={pin} />
    <div className={`flex shrink-0 items-center self-stretch border-r-2 border-[#758c98] pr-2 ${offset}`}>
      <CandleIcon />
    </div>
    <div className="flex w-9 shrink-0 items-center justify-center self-stretch border-r-2 border-[#758c98]">
      <ChainIcon checked={checked} />
    </div>
    <Dropdown label="Instrument" value="MYM0322" bold />
    {frame && <Dropdown label="Unité de temps" value={frame} bold />}
    {frame && <Dropdown label="Nombre d'unités" value="100 unités" />}
    <div className="flex grow items-center pl-3.5">
      <InfoIcon />
      <p className="pl-3.5">
        <b className="text-[#008000]">34 595 (+1,62 %)</b> <b>28 janv. 2022</b> Micro E-mini DJ30 Only0322
      </p>
    </div>
    {frame && (
      <button type="button" aria-label="Actualiser" className="flex h-12 w-12 shrink-0 items-center justify-center bg-[#a9cad8]">
        <RefreshIcon />
      </button>
    )}
  </div>
);

const SideTools: FC = () => (
  <div className="flex w-[62px] shrink-0 flex-col border-r-2 border-[#758c98] bg-[#9bb9c6] pt-1">
    {tools.map((tool) => (
      <button key={tool.name} type="button" aria-label={tool.name} className="flex h-13 items-center justify-center">
        {tool.icon}
      </button>
    ))}
    <button type="button" aria-label="Plus d'outils" className="mt-auto flex h-16 items-center justify-center border-t-2 border-[#758c98] pt-1">
      <Svg w={34} h={30}>
        <circle cx="5" cy="8" r="4" fill="#333" />
        <circle cx="17" cy="8" r="4" fill="#333" />
        <circle cx="28" cy="8" r="4" fill="#333" />
        <path d="M21 18h14l-7 9z" fill="#000" stroke="#fff" />
      </Svg>
    </button>
  </div>
);

const Account: FC = () => {
  const items = [
    ["Portefeuille :", "2 542,00 €"],
    ["Marge dispo", "2 528,35 €"],
    ["Gain latent :", "0,00 $"],
    ["Gain Jour :", "0,00 $"],
    ["Ordres :", "0", "x"],
    ["Position :", "0", "x"],
  ];
  return (
    <div className="flex h-10 items-center justify-evenly border-b-2 border-[#8ba6b2] bg-white pr-1 whitespace-nowrap">
      {items.map(([name, value, close]) => (
        <p key={name} className="flex items-center gap-1.5">
          {name} <b>{value}</b>
          {close && (
            <button type="button" aria-label={`Annuler ${name}`}>
              <CancelIcon />
            </button>
          )}
        </p>
      ))}
    </div>
  );
};

const Tabs: FC = () => (
  <div className="absolute top-0 left-0 flex h-[34px] items-center border-b-2 border-[#758c98] bg-[#cbdae2] whitespace-nowrap">
    {["#e03030", "#18b028"].map((color) => (
      <button key={color} type="button" aria-label="Indicateurs" className="flex h-full w-10 items-center justify-center border-r-2 border-[#758c98]">
        <Svg w={26} h={24}>
          <path d="M1 1h18l6 6v16H1z" fill="#fff" stroke="#8aa6c4" strokeWidth="2" />
          {color === "#e03030" ? <path d="M10 5h6v7h5l-8 8-8-8h5z" fill={color} /> : <path d="M10 20h6v-7h5l-8-8-8 8h5z" fill={color} />}
        </Svg>
      </button>
    ))}
    <button type="button" className="flex h-full items-center gap-1.5 border-r-2 border-[#758c98] pr-1 pl-1.5">
      <span className="h-5 w-5 border-r-10 border-[#e0605f] bg-[#1e9bfb]" />
      Heikin-Ashi
    </button>
    {["Points pivots (S)", "Points pivots (J)", "Points pivots (M)", "Points pivots (4h)"].map((name) => (
      <button key={name} type="button" className="flex h-full items-center gap-1.5 border-r-2 border-[#758c98] pr-1 pl-1.5">
        <span className="h-5 w-5 border-x-6 border-r-[#008000] border-l-[#f00] bg-black" />
        {name}
      </button>
    ))}
    <button type="button" className="h-full border-r-2 border-[#758c98] px-3">Autres</button>
  </div>
);

const BottomBar: FC<{ thumb: string }> = ({ thumb }) => (
  <div className="flex h-[50px] items-center border-t-2 border-[#758c98] bg-[#9bb9c6]">
    <button type="button" aria-label="Dessin" className="flex h-full w-[62px] items-center justify-center border-r-2 border-[#758c98] bg-[#91a8b3]">
      <PencilChart />
    </button>
    <button type="button" aria-label="Options de dessin" className="flex h-full w-[30px] items-center justify-center border-r-2 border-[#758c98]">
      <Caret />
    </button>
    <button type="button" aria-label="Indicateurs" className="flex h-full w-15 items-center justify-center border-r-2 border-[#758c98] bg-[#f3f3f3]">
      <Svg w={38} h={44}>
        <path d="M1 11C8-3 14 0 20 14s12 14 17-3" stroke="#1a9a2a" strokeWidth="2" />
        <path d="M1 11C8-3 14 0 20 14 14 10 9 8 1 18z" fill="#c5eac8" />
        <path d="M1 18c8-10 14-8 20-4s10 7 16 8" stroke="#c02020" strokeWidth="2" />
        <path d="M1 31h6v10H1zM19 33h5v8h-5zM32 30h6v11h-6z" fill="#0bbd0b" />
        <path d="M7 34h6v7H7zM25 34h6v7h-6z" fill="#f05a5a" />
        <path d="M13 32h6v9h-6z" fill="#0bbd0b" />
        <path d="M0 42h38" stroke="#15c" strokeWidth="2" />
      </Svg>
    </button>
    <button type="button" aria-label="Choisir un indicateur" className="flex h-full w-[29px] items-center justify-center bg-[#f3f3f3]">
      <Caret />
    </button>
    <button type="button" aria-label="Partager" className="flex h-full w-11 items-center justify-center bg-[#2690d4]">
      <Svg w={30} h={34}>
        <path d="M24 6L5 17l19 11" stroke="#fff" strokeWidth="3" />
        <circle cx="24" cy="6" r="5" fill="#fff" />
        <circle cx="5" cy="17" r="5" fill="#fff" />
        <circle cx="24" cy="28" r="5" fill="#fff" />
      </Svg>
    </button>
    <button type="button" aria-label="Associer" className="flex h-full w-[54px] items-center border-r-2 border-[#758c98] bg-[#f6f6f6] pl-1">
      <Svg w={36} h={38}>
        <path d="M1 1h15v5h-5v26h5v5H1z" fill="#1c4a7c" />
        <path d="M20 1h15v36H20v-5h5V6h-5z" fill="#8a8c90" />
      </Svg>
    </button>
    {bottomTools.map((tool) => (
      <button key={tool.name} type="button" aria-label={tool.name} className="flex w-[50px] items-center justify-center">
        {tool.icon}
      </button>
    ))}
    <button type="button" aria-label="Replier" className="flex w-8 items-center justify-center">
      <Svg w={18} h={20}>
        <path d="M8 1L2 10l6 9M16 1l-6 9 6 9" stroke="#445c66" strokeWidth="2" />
      </Svg>
    </button>
    <div className="flex h-8 grow">
      <button type="button" aria-label="Défiler à gauche" className="flex w-8 items-center justify-center rounded-l-md border-2 border-[#758c98] bg-[#a9cad8]">
        <Svg w={8} h={14}>
          <path d="M8 0v14L0 7z" fill="#000" />
        </Svg>
      </button>
      <div className="flex grow justify-end border-y-2 border-[#84a0ac]">
        <div className={`border-l-2 border-[#758c98] bg-linear-to-b from-[#b4d6e3] to-[#a3c3d0] ${thumb}`} />
      </div>
      <button type="button" aria-label="Défiler à droite" className="flex w-8 items-center justify-center rounded-r-md border-2 border-[#758c98] bg-[#a9cad8]">
        <Svg w={8} h={14}>
          <path d="M0 0v14l8-7z" fill="#000" />
        </Svg>
      </button>
    </div>
    {zoomTools.map((tool) => (
      <button key={tool.name} type="button" aria-label={tool.name} className="flex w-13 items-center justify-center pl-1.5">
        {tool.icon}
      </button>
    ))}
  </div>
);

const Pane: FC<PaneProps> = ({ chart, frame, offset, thumb, checked, tabs }) => (
  <section className="flex min-w-0 flex-col">
    <TitleBar frame={frame} offset={offset} checked={checked} />
    <div className="flex">
      <SideTools />
      <div className="min-w-0 grow">
        <Account />
        <div className="relative">
          <Chart data={chart} />
          {tabs && <Tabs />}
        </div>
      </div>
    </div>
    <BottomBar thumb={thumb} />
  </section>
);

const Spinner: FC<{ label: string }> = ({ label }) => (
  <div className="flex h-[42px] min-w-0 grow rounded-md border-2 border-[#758c98] bg-white">
    <input aria-label={label} defaultValue="0" className="w-0 grow pr-0.5 text-right" />
    <div className="flex w-8 flex-col rounded-r border-l-2 border-[#758c98] bg-[#a9cad8]">
      <button type="button" aria-label="Plus" className="flex grow items-center justify-center border-b-2 border-[#758c98]">
        <Svg w={10} h={5}>
          <path d="M0 5h10L5 0z" fill="#000" />
        </Svg>
      </button>
      <button type="button" aria-label="Moins" className="flex grow items-center justify-center">
        <Svg w={10} h={5}>
          <path d="M0 0h10L5 5z" fill="#758c98" />
        </Svg>
      </button>
    </div>
  </div>
);

const LimitButtons: FC<{ names: string[]; muted?: boolean }> = ({ names, muted }) => (
  <div className={`grid h-[58px] gap-0.5 overflow-hidden border-y-2 border-[#758c98] bg-[#758c98] whitespace-nowrap ${muted ? "grid-cols-[92fr_106fr] text-[#8796a0]" : "grid-cols-2"}`}>
    {names.map((name) => (
      <button key={name} type="button" disabled={muted} className={`min-w-0 overflow-hidden text-left ${muted ? "bg-[#cbdae2]" : "bg-[#ebebeb]"}`}>
        {name}
      </button>
    ))}
  </div>
);

const Quote: FC<{ name: string; price: string; color: string }> = ({ name, price, color }) => (
  <button type="button" className={`flex grow flex-col overflow-hidden pt-3 text-left whitespace-nowrap ${color}`}>
    <span className="text-[44px] leading-[50px]">{name}</span>
    <span className="pt-15 text-[56px] leading-[64px]">{price}</span>
  </button>
);

const BlueArrow: FC<{ left?: boolean }> = ({ left }) => (
  <Svg w={26} h={14}>
    {left ? <path d="M26 5v4H10v5L0 7l10-7v5z" fill="#4a90e0" /> : <path d="M0 5v4h16v5l10-7L16 0v5z" fill="#4a90e0" />}
  </Svg>
);

const OrderPanel: FC = () => (
  <section className="flex min-w-0 flex-col bg-[#cbdae2]">
    <TitleBar offset="pl-2.5" pin />
    <div className="grid grow grid-cols-[172fr_200fr_170fr] gap-1 bg-[#758c98]">
      <div className="flex min-w-0 flex-col bg-[#cbdae2]">
        <dl className="grid h-[414px] grid-cols-[82px_50px] content-start overflow-hidden pt-[92px] pl-5 leading-[34px] whitespace-nowrap">
          <dt>Port...</dt>
          <dd className="overflow-hidden font-bold">2 542,00 €</dd>
          <dt>Gain...</dt>
          <dd className="overflow-hidden font-bold">0,00 $</dd>
          <dt>Trad...</dt>
          <dd className="overflow-hidden font-bold">
            <span className="text-[#008000]">0</span> <span className="font-normal">/</span> 0 /
          </dd>
          <dt className="leading-[46px]">...</dt>
          <dd className="flex items-center gap-1.5 font-bold">
            0 <CancelIcon />
          </dd>
          <dt className="leading-[46px]">P...</dt>
          <dd className="flex items-center gap-1.5 font-bold">
            0 <CancelIcon />
          </dd>
          <dt>Duré...</dt>
          <dd className="font-bold">-</dd>
        </dl>
        <LimitButtons names={["Achat L..", "Vente L.."]} />
        <Quote name="Vente MKT" price="34 524" color="bg-[#ebbcbc]" />
      </div>
      <div className="flex min-w-0 flex-col bg-[#cbdae2]">
        <div className="flex h-[414px] flex-col pt-[76px]">
          <label htmlFor="qty" className="pl-5 text-center leading-7">Qté</label>
          <input id="qty" defaultValue="1" className="mr-3 ml-8 h-[68px] rounded-md border-2 border-[#758c98] bg-white pr-2 text-right text-[44px]" />
          <div className="mt-6 flex items-center pr-3 pl-5">
            <input aria-label="Points" defaultValue="10" className="h-10 w-8 rounded-l-md border-2 border-r-0 border-[#758c98] pl-0.5 text-[#758c98]" />
            <span className="grow pl-1">pts</span>
            <label className="flex items-center gap-2.5 pr-2">
              <input type="checkbox" className="h-6 w-6 appearance-none rounded border-2 border-[#758c98] bg-white" />T
            </label>
          </div>
          <hr className="mt-auto mr-3 ml-3.5 border-t-2 border-[#758c98]" />
          <div className="mt-5 mb-6 flex gap-3 pr-0.5">
            <Spinner label="Stop" />
            <Spinner label="Limite" />
          </div>
        </div>
        <LimitButtons names={["Stop à 0 t", "Limite à 0 t"]} muted />
        <p className="flex grow items-center justify-center text-[#8796a0]">Pas de position</p>
      </div>
      <div className="flex min-w-0 flex-col bg-[#cbdae2]">
        <div className="h-[414px]" />
        <LimitButtons names={["Achat L..", "Vente L.."]} />
        <Quote name="Achat MKT" price="34 600" color="bg-[#abd2ab]" />
      </div>
    </div>
    <div className="flex h-[58px] items-center border-y-2 border-[#758c98] whitespace-nowrap text-[#8796a0]">
      <button type="button" aria-label="Disposition" className="flex h-full w-[50px] shrink-0 items-center justify-center border-r-2 border-[#758c98]">
        <Svg w={40} h={34}>
          <path d="M1 3h36v27H1z" fill="#fff" stroke="#555" strokeWidth="2" />
          <path d="M2 12h12v10H2z" fill="#f08080" />
          <path d="M25 12h12v10H25z" fill="#3fc94a" />
          <path d="M1 11h36M1 22h36M13 3v19M25 3v19M19 22v8" stroke="#555" strokeWidth="2" />
          <path d="M25 25h14l-7 8z" fill="#000" stroke="#fff" />
        </Svg>
      </button>
      <button type="button" disabled className="h-full min-w-0 grow overflow-hidden border-r-2 border-[#758c98] text-center">Inverser position</button>
      <button type="button" disabled className="h-full w-[232px] shrink-0 overflow-hidden border-r-2 border-[#758c98]">Pas d'ordres en attente</button>
      <button type="button" aria-label="Courbe" className="flex w-12 shrink-0 items-center justify-center">
        <Svg w={36} h={34}>
          <rect x="1" y="1" width="34" height="32" fill="#fff" stroke="#8aa0ac" strokeWidth="2" />
          <path d="M2 7h32" stroke="#5bdc5b" strokeWidth="3" />
          <path d="M2 27h32" stroke="#f09090" strokeWidth="5" />
          <path d="M6 18l11 8" stroke="#e02020" strokeWidth="3" />
          <path d="M17 26L30 10" stroke="#2bb52b" strokeWidth="3" />
          <g fill="#fff" strokeWidth="2">
            <circle cx="6" cy="18" r="3" stroke="#2bb52b" />
            <circle cx="17" cy="26" r="3" stroke="#e02020" />
            <circle cx="30" cy="10" r="3" stroke="#2bb52b" />
          </g>
        </Svg>
      </button>
      <button type="button" aria-label="Configurer" className="flex w-[50px] shrink-0 items-center justify-center">
        <Svg w={34} h={36}>
          {[[1, 2], [5, 9], [1, 16], [5, 23]].map(([bx, by]) => (
            <rect key={by} x={bx} y={by} width={17 - bx} height="7" fill="#3fd04a" stroke="#0f6a1a" />
          ))}
          {[[26, 2], [32, 9], [28, 16], [32, 23]].map(([bx, by]) => (
            <rect key={by} x="17" y={by} width={bx - 17} height="7" fill="#f05a5a" stroke="#9a1f1f" />
          ))}
          <Wrench />
        </Svg>
      </button>
    </div>
    <div className="grid h-[62px] grid-cols-[340fr_210fr] items-center bg-linear-to-b from-[#b4d6e3] to-[#a3c3d0] leading-7">
      <div className="flex items-center gap-1 pl-[54px]">
        Offre <BlueArrow /> <b>1</b>
        <b className="pl-12">2</b> <BlueArrow left /> Demande
      </div>
      <p className="pl-16">Dernier :</p>
      <p className="pl-[100px]">Exec : 453 202</p>
      <p className="pl-2.5">Spread: 76</p>
    </div>
  </section>
);

const MenuBar: FC = () => (
  <header className="flex h-[52px] items-center border-y-2 border-[#4f7bab] bg-linear-to-b from-[#aed4ff] to-[#90b5e4] whitespace-nowrap">
    <div className="flex w-[146px] shrink-0 items-center gap-3 pl-3.5">
      <button type="button" aria-label="Fermer l'application">
        <Svg w={20} h={20}>
          <path d="M2 1l16 18M18 1L2 19" stroke="#46709c" strokeWidth="3.500" />
        </Svg>
      </button>
      <button type="button" aria-label="Réduire l'application">
        <Svg w={20} h={20}>
          <path d="M0 18h20" stroke="#46709c" strokeWidth="4" />
        </Svg>
      </button>
      <button type="button" aria-label="Épingler l'application">
        <PinIcon color="#46709c" />
      </button>
      <button type="button" aria-label="Outils">
        <Svg w={24} h={24}>
          <rect x="1" y="1" width="22" height="22" stroke="#46709c" strokeWidth="2" strokeDasharray="4 3" />
          <path d="M5 19l8-8c-1-5 2-7 6-6l-3 4 1 2 3 0c0 4-3 6-5 4l-7 7z" fill="#46709c" />
        </Svg>
      </button>
    </div>
    <div className="flex h-full w-[188px] items-center gap-1.5 bg-linear-to-b from-[#424d56] to-[#2a3138] pl-2">
      <CandleIcon />
      <p className="leading-5 text-white">
        <b className="block text-[#8fe02a]">ProRealTime</b>
        <span className="text-[20px]">Complete</span>
      </p>
    </div>
    <nav className="flex grow gap-6 pl-3">
      {["Fichier", "Affichage", "Trading", "Social", "Objets", "Réglages", "Aide"].map((item) => (
        <button key={item} type="button">
          {item}
        </button>
      ))}
    </nav>
    <button type="button" aria-label="Mode dessin" className="flex h-full w-[51px] items-center justify-center border border-[#7f98a8] bg-[#92aab8]">
      <PencilChart />
    </button>
    <button type="button" aria-label="Drapeau" className="flex h-full w-[50px] items-center justify-center border-r-2 border-[#4f7bab]">
      <Svg w={32} h={34}>
        <path d="M4 3v30" stroke="#c8c8c8" strokeWidth="4" />
        <path d="M3 3c8-4 12 6 27 1v17c-12 5-18-5-27 0z" fill="#ffc928" />
        <path d="M3 3c8-4 12 6 27 1v5C16 14 12 4 3 8z" fill="#ffe34a" />
      </Svg>
    </button>
    <div className="flex h-full items-center gap-3 border-r-2 border-[#4f7bab] px-3">
      <button type="button">Points Pivots</button>
      <button type="button">Supply</button>
    </div>
    <div className="flex h-full items-center gap-1.5 border-r-2 border-[#4f7bab] pr-1.5 pl-2">
      <Svg w={20} h={32}>
        <path d="M1 1h18v30H1zM1 11h18M1 21h18" fill="#4fd84f" stroke="#46709c" strokeWidth="2" />
      </Svg>
      Push+
    </div>
    <div className="flex h-full items-center border-r-4 border-[#4f7bab] pr-1.5 pl-2">
      <span className="h-5 w-5 border-2 border-[#46709c] bg-[#8cea8c]" />
    </div>
  </header>
);

const App: FC = () => {
  return (
    <div className="bg-[#445c66] pb-1 font-['Liberation_Sans',Arial,sans-serif] text-[22px] leading-7 text-black">
      <MenuBar />
      <div className="mb-1 flex h-15 items-center bg-[#9bb9c6] pl-1">
        {tools.map((tool) => (
          <button key={tool.name} type="button" aria-label={tool.name} className="flex w-13 items-center justify-center">
            {tool.icon}
          </button>
        ))}
      </div>
      <main className="flex flex-col gap-1 pr-[3px]">
        <div className="grid grid-cols-[minmax(0,1798fr)_minmax(0,1649fr)] gap-1">
          <Pane chart={charts.m5} frame="5 minutes" offset="pl-[247px]" thumb="w-40" tabs />
          <Pane chart={charts.ticks} frame="100 ticks" offset="pl-[180px]" thumb="w-35" />
        </div>
        <div className="grid grid-cols-[minmax(0,1470fr)_minmax(0,550fr)_minmax(0,1423fr)] gap-1">
          <Pane chart={charts.h1} frame="1 heure" offset="pl-[98px]" thumb="w-27" />
          <OrderPanel />
          <Pane chart={charts.m15} frame="15 minutes" offset="pl-[56px]" thumb="w-25" checked />
        </div>
      </main>
    </div>
  );
};

export default App;
